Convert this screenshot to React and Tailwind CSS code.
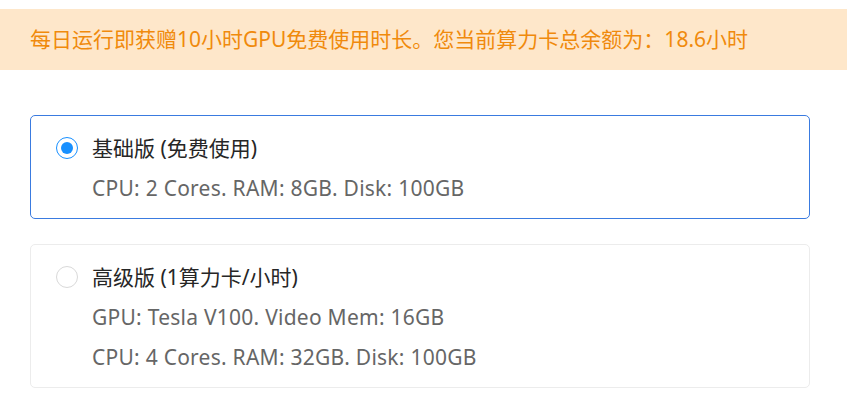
import React from "react";

function Radio({ checked }) {
  return checked ? (
    <div className="w-[22px] h-[22px] rounded-full border border-[#1890ff] flex items-center justify-center shrink-0">
      <div className="w-[12px] h-[12px] rounded-full bg-[#1890ff]" />
    </div>
  ) : (
    <div className="w-[22px] h-[22px] rounded-full border border-[#d9d9d9] bg-white shrink-0" />
  );
}

function Card({ checked, title, lines }) {
  return (
    <div
      className={
        "mx-[30px] w-[780px] rounded-[5px] border pt-[12px] pb-[10px] pl-[25px] " +
        (checked ? "border-[#3a7be0]" : "border-[#ececec]")
      }
    >
      <div className="flex items-center h-[40px]">
        <Radio checked={checked} />
        <span className="ml-[14px] text-[21px] text-[#262626] leading-[40px]">{title}</span>
      </div>
      {lines.map((l) => (
        <div key={l} className="pl-[36px] h-[40px] leading-[40px] text-[21px] tracking-[0.25px] text-[#666666]">
          {l}
        </div>
      ))}
    </div>
  );
}

export default function App() {
  return (
    <div
      className="w-[847px] h-[408px] bg-white pt-[9px]"
      style={{ fontFamily: '"Noto Sans", "Noto Sans CJK SC", sans-serif' }}
    >
      <div className="h-[61px] bg-[#fee7ca] flex items-center pl-[30px] text-[21px] text-[#f08a0c]">
        每日运行即获赠10小时GPU免费使用时长。您当前算力卡总余额为：18.6小时
      </div>
      <div className="mt-[45px] flex flex-col gap-[25px]">
        <Card checked title="基础版 (免费使用)" lines={["CPU: 2 Cores. RAM: 8GB. Disk: 100GB"]} />
        <Card
          title="高级版 (1算力卡/小时)"
          lines={["GPU: Tesla V100. Video Mem: 16GB", "CPU: 4 Cores. RAM: 32GB. Disk: 100GB"]}
        />
      </div>
    </div>
  );
}
